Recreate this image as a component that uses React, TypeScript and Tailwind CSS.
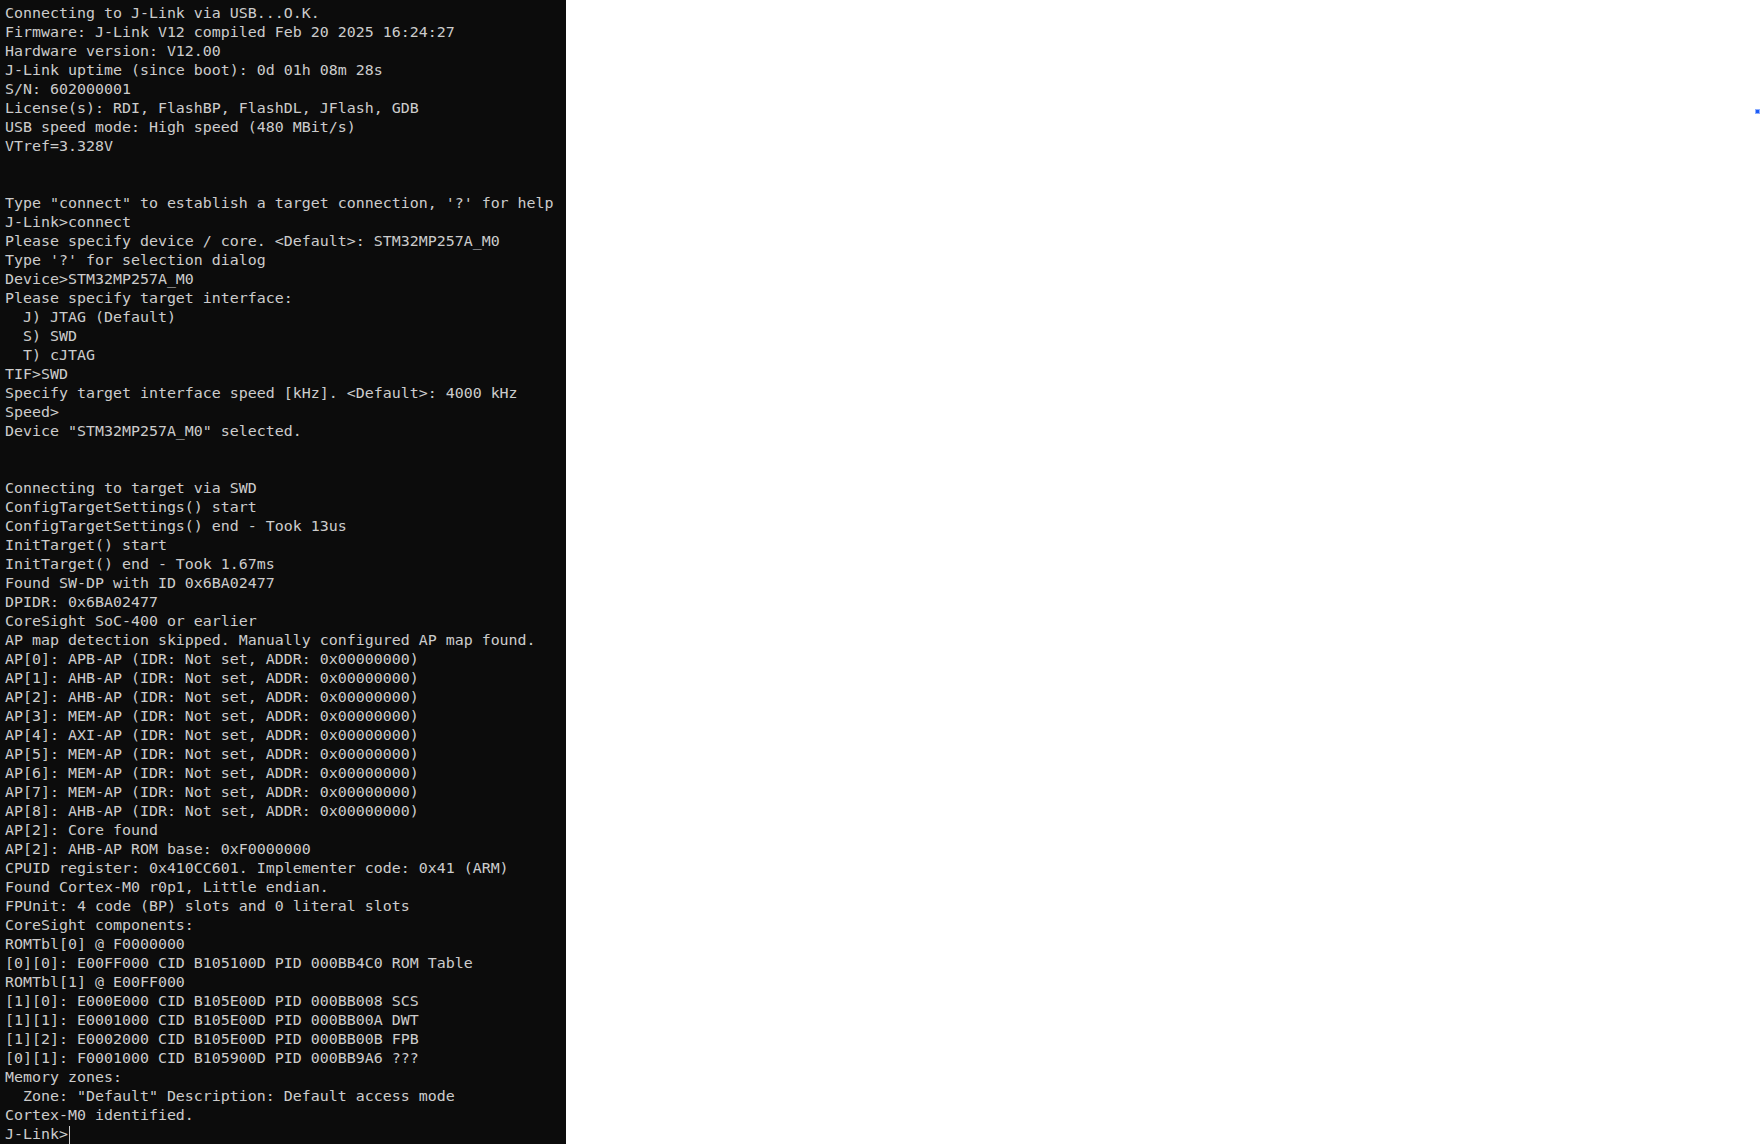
const lines: string[] = [
  "Connecting to J-Link via USB...O.K.",
  "Firmware: J-Link V12 compiled Feb 20 2025 16:24:27",
  "Hardware version: V12.00",
  "J-Link uptime (since boot): 0d 01h 08m 28s",
  "S/N: 602000001",
  "License(s): RDI, FlashBP, FlashDL, JFlash, GDB",
  "USB speed mode: High speed (480 MBit/s)",
  "VTref=3.328V",
  "",
  "",
  "Type \"connect\" to establish a target connection, '?' for help",
  "J-Link>connect",
  "Please specify device / core. <Default>: STM32MP257A_M0",
  "Type '?' for selection dialog",
  "Device>STM32MP257A_M0",
  "Please specify target interface:",
  "  J) JTAG (Default)",
  "  S) SWD",
  "  T) cJTAG",
  "TIF>SWD",
  "Specify target interface speed [kHz]. <Default>: 4000 kHz",
  "Speed>",
  "Device \"STM32MP257A_M0\" selected.",
  "",
  "",
  "Connecting to target via SWD",
  "ConfigTargetSettings() start",
  "ConfigTargetSettings() end - Took 13us",
  "InitTarget() start",
  "InitTarget() end - Took 1.67ms",
  "Found SW-DP with ID 0x6BA02477",
  "DPIDR: 0x6BA02477",
  "CoreSight SoC-400 or earlier",
  "AP map detection skipped. Manually configured AP map found.",
  "AP[0]: APB-AP (IDR: Not set, ADDR: 0x00000000)",
  "AP[1]: AHB-AP (IDR: Not set, ADDR: 0x00000000)",
  "AP[2]: AHB-AP (IDR: Not set, ADDR: 0x00000000)",
  "AP[3]: MEM-AP (IDR: Not set, ADDR: 0x00000000)",
  "AP[4]: AXI-AP (IDR: Not set, ADDR: 0x00000000)",
  "AP[5]: MEM-AP (IDR: Not set, ADDR: 0x00000000)",
  "AP[6]: MEM-AP (IDR: Not set, ADDR: 0x00000000)",
  "AP[7]: MEM-AP (IDR: Not set, ADDR: 0x00000000)",
  "AP[8]: AHB-AP (IDR: Not set, ADDR: 0x00000000)",
  "AP[2]: Core found",
  "AP[2]: AHB-AP ROM base: 0xF0000000",
  "CPUID register: 0x410CC601. Implementer code: 0x41 (ARM)",
  "Found Cortex-M0 r0p1, Little endian.",
  "FPUnit: 4 code (BP) slots and 0 literal slots",
  "CoreSight components:",
  "ROMTbl[0] @ F0000000",
  "[0][0]: E00FF000 CID B105100D PID 000BB4C0 ROM Table",
  "ROMTbl[1] @ E00FF000",
  "[1][0]: E000E000 CID B105E00D PID 000BB008 SCS",
  "[1][1]: E0001000 CID B105E00D PID 000BB00A DWT",
  "[1][2]: E0002000 CID B105E00D PID 000BB00B FPB",
  "[0][1]: F0001000 CID B105900D PID 000BB9A6 ???",
  "Memory zones:",
  "  Zone: \"Default\" Description: Default access mode",
  "Cortex-M0 identified.",
];

export default function App() {
  return (
    <div className="flex h-[1144px] w-full overflow-hidden bg-white">
      {/* terminal */}
      <div
        className="w-[566px] shrink-0 bg-[#0c0c0c] pl-[5px] pt-[4px] text-[14.95px] leading-[19px] text-[#cccccc] whitespace-pre"
        style={{ fontFamily: '"DejaVu Sans Mono", "Liberation Mono", monospace' }}
      >
        {lines.map((l, i) => (
          <div key={i} className="h-[19px]">
            {l}
          </div>
        ))}
        <div className="flex h-[19px] items-center">
          <span>J-Link&gt;</span>
          <span className="ml-[1px] inline-block h-[18px] w-[1px] bg-[#cccccc]" />
        </div>
      </div>

      {/* empty area */}
      <div className="relative flex-1">
        <div className="absolute left-[1190px] top-[110px] h-[3px] w-[3px] bg-[#1d5cf5] shadow-[0_0_0_1px_#8fb0ff]" />
      </div>
    </div>
  );
}
